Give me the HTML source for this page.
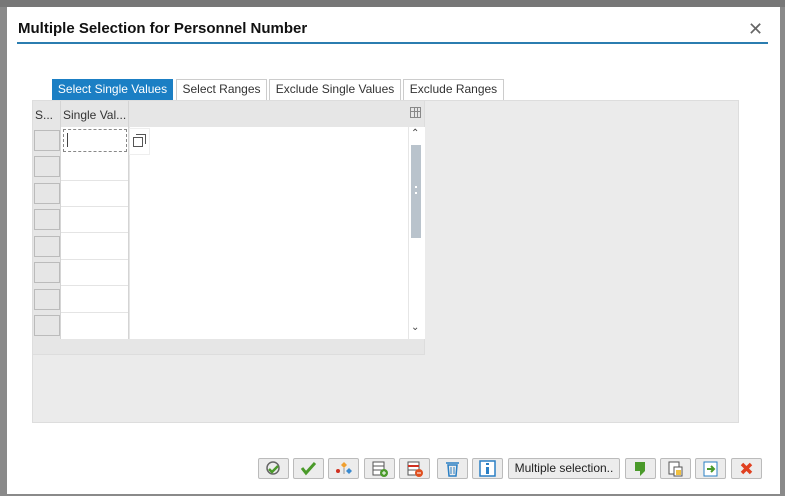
<!DOCTYPE html>
<html><head><meta charset="utf-8"><style>
*{box-sizing:border-box;margin:0;padding:0}
body{width:785px;height:496px;background:#8a8a8a;position:relative;overflow:hidden;font-family:"Liberation Sans",Arial,sans-serif;font-size:12px;color:#222}
.a{position:absolute}
.dlg{left:7px;top:7px;width:773px;height:487px;background:#fff}
.tab{position:absolute;top:79px;height:21px;border:1px solid #ccc;border-bottom:none;background:#fff;line-height:19px;padding:0;text-align:center;white-space:nowrap;overflow:hidden;font-size:12px;color:#333}
.btn{position:absolute;top:458px;height:21px;border:1px solid #bbb;background:#ececec;border-radius:2px}
.rowsel{position:absolute;left:34px;width:26px;height:21px;background:#e6e6e6;border:1px solid #bbb}
.rl{position:absolute;left:61px;width:67px;height:1px;background:#e4e4e4}
</style></head><body>
<div class="a" style="left:0;top:0;width:785px;height:7px;background:#777"></div>
<div class="a dlg"></div>
<div class="a" style="left:18px;top:20px;font-size:15px;font-weight:bold;color:#111">Multiple Selection for Personnel Number</div>
<div class="a" style="left:748px;top:19px;font-size:18px;color:#666">✕</div>
<div class="a" style="left:17px;top:42px;width:751px;height:2px;background:#2b7db0"></div>

<div class="tab" style="left:52px;width:121px;background:#1b7fc4;color:#fff;border-color:#1b7fc4">Select Single Values</div>
<div class="tab" style="left:176px;width:91px">Select Ranges</div>
<div class="tab" style="left:269px;width:132px">Exclude Single Values</div>
<div class="tab" style="left:403px;width:101px">Exclude Ranges</div>

<div class="a" style="left:32px;top:100px;width:707px;height:323px;background:#ebebeb;border:1px solid #ddd"></div>
<div class="a" style="left:33px;top:101px;width:392px;height:254px;background:#e6e6e6;border-right:1px solid #ddd;border-bottom:1px solid #ddd"></div>
<div class="a" style="left:35px;top:108px;color:#333">S...</div>
<div class="a" style="left:60px;top:101px;width:1px;height:238px;background:#d4d4d4"></div>
<div class="a" style="left:63px;top:108px;color:#333">Single Val...</div>
<div class="a" style="left:128px;top:101px;width:1px;height:238px;background:#d4d4d4"></div>
<div class="a" style="left:410px;top:107px;width:11px;height:11px;border:1px solid #888;background:linear-gradient(#888,#888) 0 3px/100% 1px no-repeat,linear-gradient(90deg,#888,#888) 3px 0/1px 100% no-repeat,linear-gradient(90deg,#888,#888) 6px 0/1px 100% no-repeat"></div>
<div class="a" style="left:61px;top:127px;width:67px;height:212px;background:#fff"></div>
<div class="a" style="left:130px;top:127px;width:278px;height:212px;background:#fff"></div>
<div class="a" style="left:63px;top:129px;width:64px;height:23px;border:1px dashed #888;background:#fff"></div>
<div class="a" style="left:67px;top:133px;width:1px;height:14px;background:#444"></div>
<div class="a" style="left:129px;top:128px;width:21px;height:27px;background:#fff;border:1px solid #eee"></div>
<div class="a" style="left:133px;top:137px;width:10px;height:10px;border:1px solid #555;background:#fff"></div>
<div class="a" style="left:136px;top:134px;width:10px;height:10px;border-top:1px solid #555;border-right:1px solid #555"></div>
<div class="rl" style="top:180px"></div><div class="rl" style="top:206px"></div><div class="rl" style="top:232px"></div><div class="rl" style="top:259px"></div><div class="rl" style="top:285px"></div><div class="rl" style="top:312px"></div>
<div class="rowsel" style="top:130px"></div><div class="rowsel" style="top:156px"></div><div class="rowsel" style="top:183px"></div><div class="rowsel" style="top:209px"></div><div class="rowsel" style="top:236px"></div><div class="rowsel" style="top:262px"></div><div class="rowsel" style="top:289px"></div><div class="rowsel" style="top:315px"></div>
<div class="a" style="left:409px;top:127px;width:16px;height:212px;background:#fff"></div>
<div class="a" style="left:411px;top:128px;font-size:10px;color:#444">⌃</div>
<div class="a" style="left:411px;top:145px;width:10px;height:93px;background:#b9c3cc"></div>
<div class="a" style="left:415px;top:186px;width:2px;height:8px;border-top:2px dotted #fff;border-bottom:2px dotted #fff"></div>
<div class="a" style="left:411px;top:322px;font-size:10px;color:#444">⌄</div>

<div class="btn" style="left:258px;width:31px"><svg width="29" height="19"><circle cx="14" cy="9" r="6" fill="none" stroke="#666" stroke-width="1.5"/><path d="M10 10l3 3 6-6" stroke="#4a9a2a" stroke-width="2.5" fill="none"/></svg></div>
<div class="btn" style="left:293px;width:31px"><svg width="29" height="19"><path d="M8 9l4 5 9-10" stroke="#4a9a2a" stroke-width="3" fill="none"/></svg></div>
<div class="btn" style="left:328px;width:31px"><svg width="29" height="19"><path d="M15 3l3 3-3 3-3-3z" fill="#f0a030"/><path d="M20 9l3 3-3 3-3-3z" fill="#3a8ad0"/><circle cx="9" cy="12" r="2" fill="#d03020"/><path d="M15 9v6" stroke="#999"/></svg></div>
<div class="btn" style="left:364px;width:31px"><svg width="29" height="19"><rect x="8" y="3" width="11" height="13" fill="#fff" stroke="#555"/><path d="M8 7h11M8 11h11" stroke="#555"/><circle cx="19" cy="14" r="4" fill="#4a9a2a"/><path d="M17 14h4M19 12v4" stroke="#fff"/></svg></div>
<div class="btn" style="left:399px;width:31px"><svg width="29" height="19"><rect x="8" y="3" width="11" height="13" fill="#fff" stroke="#555"/><path d="M8 7h11" stroke="#d03020" stroke-width="2"/><path d="M8 11h11" stroke="#555"/><circle cx="19" cy="14" r="4" fill="#e05020"/><path d="M17 14h4" stroke="#fff"/></svg></div>
<div class="btn" style="left:437px;width:31px"><svg width="29" height="19"><path d="M8 4h13M10 6h9l-1 11h-7z" stroke="#2a7fc4" stroke-width="1.5" fill="none"/><path d="M13 8v7M16 8v7" stroke="#2a7fc4"/></svg></div>
<div class="btn" style="left:472px;width:31px"><svg width="29" height="19"><rect x="7" y="2" width="15" height="15" fill="#fff" stroke="#2a7fc4" stroke-width="1.5"/><rect x="13" y="4" width="3" height="2" fill="#2a7fc4"/><rect x="13" y="8" width="3" height="7" fill="#2a7fc4"/></svg></div>
<div class="btn" style="left:508px;width:112px;font-size:12px;line-height:19px;text-align:center;color:#222">Multiple selection..</div>
<div class="btn" style="left:625px;width:31px"><svg width="29" height="19"><path d="M9 3h10v9l-5 5v-5h-5z" fill="#4a9a2a"/></svg></div>
<div class="btn" style="left:660px;width:31px"><svg width="29" height="19"><rect x="8" y="3" width="10" height="12" fill="#fff" stroke="#555"/><rect x="13" y="8" width="8" height="9" fill="#fff" stroke="#555"/><rect x="15" y="11" width="5" height="5" fill="#f0c040"/></svg></div>
<div class="btn" style="left:695px;width:31px"><svg width="29" height="19"><rect x="8" y="3" width="13" height="14" fill="#fff" stroke="#2a7fc4"/><path d="M11 10h6M15 7l3 3-3 3" stroke="#4a9a2a" stroke-width="2" fill="none"/></svg></div>
<div class="btn" style="left:731px;width:31px"><svg width="29" height="19"><path d="M10 5l9 9M19 5l-9 9" stroke="#e04020" stroke-width="3.5"/></svg></div>
</body></html>
